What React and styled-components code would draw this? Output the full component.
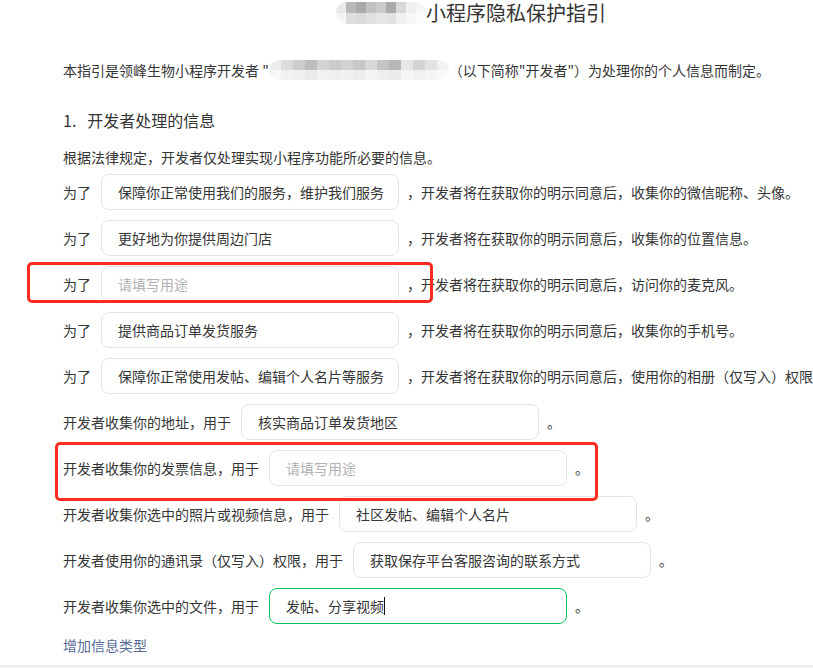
import React from "react";
import styled, { createGlobalStyle } from "styled-components";

const GlobalStyle = createGlobalStyle`
  html, body {
    margin: 0;
    padding: 0;
    background: #f2f2f2;
    overflow: hidden;
  }
  body {
    font-family: "Noto Sans CJK SC", "Noto Sans", sans-serif;
    color: #353535;
  }
`;

const Page = styled.div`
  position: relative;
  width: 942px;
  background: #ffffff;
  padding: 0 0 10px 63px;
  box-sizing: border-box;
  border-bottom: 1px solid #e9e9e9;
`;

const TitleRow = styled.div`
  display: flex;
  justify-content: center;
  align-items: center;
  height: 26px;
  margin-left: -63px;
  font-size: 20px;
  line-height: 26px;
  color: #353535;
`;

const Mosaic = styled.span`
  display: inline-flex;
  flex-direction: column;
  border-radius: 10px;
  overflow: hidden;
  flex-shrink: 0;
`;

const MosaicRow = styled.span`
  display: flex;
`;

const MosaicCell = styled.span`
  display: block;
  width: ${(p) => p.$w}px;
  height: ${(p) => p.$h}px;
  background: ${(p) => p.$color};
`;

const Intro = styled.p`
  display: flex;
  align-items: center;
  margin: 34px 0 0;
  font-size: 14px;
  line-height: 20px;
  white-space: nowrap;
`;

const Heading = styled.h2`
  margin: 28px 0 0;
  font-size: 16px;
  font-weight: normal;
  line-height: 24px;
`;

const Num = styled.span`
  margin-right: 11px;
`;

const Note = styled.p`
  margin: 15px 0 0;
  font-size: 14px;
  line-height: 20px;
`;

const Rows = styled.div`
  display: flex;
  flex-direction: column;
  gap: 10px;
  margin-top: 7px;
`;

const Row = styled.div`
  display: flex;
  align-items: center;
  height: 36px;
  font-size: 14px;
  white-space: nowrap;
`;

const Label = styled.span`
  margin-right: 10px;
`;

const Field = styled.div`
  display: flex;
  align-items: center;
  width: 298px;
  height: 36px;
  box-sizing: border-box;
  padding-left: 16px;
  border: 1px solid ${(p) => (p.$focused ? "#07c160" : "#e4e4e4")};
  border-radius: 8px;
  color: ${(p) => (p.$placeholder ? "#b2b2b2" : "#353535")};
  flex-shrink: 0;
`;

const Caret = styled.span`
  display: inline-block;
  width: 1px;
  height: 18px;
  background: #111;
`;

const Tail = styled.span`
  margin-left: 8px;
`;

const AddLink = styled.a`
  display: block;
  margin-top: 11px;
  font-size: 14px;
  line-height: 20px;
  color: #576b95;
  text-decoration: none;
`;

const Highlight = styled.div`
  position: absolute;
  box-sizing: border-box;
  border: 3px solid #fa2b21;
  border-radius: 5px;
  pointer-events: none;
`;

const titleCells = [
  ["#e9e9e9", "#b9b9b9", "#a9a9a9", "#c2c2c2", "#cbcbcb", "#aaaaaa", "#d8d8d8", "#f0f0f0", "#f6f6f6"],
  ["#f4f4f4", "#dedede", "#dadada", "#e0e0e0", "#e5e5e5", "#e2e2e2", "#f0f0f0", "#f7f7f7", "#fbfbfb"],
];

const introCells = [
  ["#ededed", "#dcdcdc", "#cdcdcd", "#bdbdbd", "#d4d4d4", "#cbcbcb", "#d2d2d2", "#c8c8c8", "#d8d8d8", "#c4c4c4", "#b7b7b7", "#e6e6e6", "#d4d4d4", "#e2e2e2", "#f2f2f2"],
  ["#f7f7f7", "#f2f2f2", "#efefef", "#ebebeb", "#f1f1f1", "#eeeeee", "#f0f0f0", "#ececec", "#f3f3f3", "#eeeeee", "#ebebeb", "#f5f5f5", "#f1f1f1", "#f5f5f5", "#fafafa"],
];

const rows = [
  { label: "为了", value: "保障你正常使用我们的服务，维护我们服务", tail: "，开发者将在获取你的明示同意后，收集你的微信昵称、头像。" },
  { label: "为了", value: "更好地为你提供周边门店", tail: "，开发者将在获取你的明示同意后，收集你的位置信息。" },
  { label: "为了", value: "", tail: "，开发者将在获取你的明示同意后，访问你的麦克风。" },
  { label: "为了", value: "提供商品订单发货服务", tail: "，开发者将在获取你的明示同意后，收集你的手机号。" },
  { label: "为了", value: "保障你正常使用发帖、编辑个人名片等服务", tail: "，开发者将在获取你的明示同意后，使用你的相册（仅写入）权限。" },
  { label: "开发者收集你的地址，用于", value: "核实商品订单发货地区", tail: "。" },
  { label: "开发者收集你的发票信息，用于", value: "", tail: "。" },
  { label: "开发者收集你选中的照片或视频信息，用于", value: "社区发帖、编辑个人名片", tail: "。" },
  { label: "开发者使用你的通讯录（仅写入）权限，用于", value: "获取保存平台客服咨询的联系方式", tail: "。" },
  { label: "开发者收集你选中的文件，用于", value: "发帖、分享视频", tail: "。", focused: true },
];

const Blur = ({ cells, w, h }) => (
  <Mosaic>
    {cells.map((line, i) => (
      <MosaicRow key={i}>
        {line.map((c, j) => (
          <MosaicCell key={j} $w={w} $h={h} $color={c} />
        ))}
      </MosaicRow>
    ))}
  </Mosaic>
);

export default function App() {
  return (
    <>
      <GlobalStyle />
      <Page>
        <TitleRow>
          <Blur cells={titleCells} w={10} h={11} />
          <span>小程序隐私保护指引</span>
        </TitleRow>
        <Intro>
          本指引是领峰生物小程序开发者 "
          <Blur cells={introCells} w={12} h={10} />
          <span>（以下简称"开发者"）为处理你的个人信息而制定。</span>
        </Intro>
        <Heading>
          <Num>1.</Num>开发者处理的信息
        </Heading>
        <Note>根据法律规定，开发者仅处理实现小程序功能所必要的信息。</Note>
        <Rows>
          {rows.map((r, i) => (
            <Row key={i}>
              <Label>{r.label}</Label>
              <Field $placeholder={!r.value} $focused={r.focused}>
                {r.value || "请填写用途"}
                {r.focused && <Caret />}
              </Field>
              <Tail>{r.tail}</Tail>
            </Row>
          ))}
        </Rows>
        <AddLink href="#">增加信息类型</AddLink>
        <Highlight style={{ left: 27, top: 262, width: 406, height: 41 }} />
        <Highlight style={{ left: 55, top: 442, width: 543, height: 59 }} />
      </Page>
    </>
  );
}
